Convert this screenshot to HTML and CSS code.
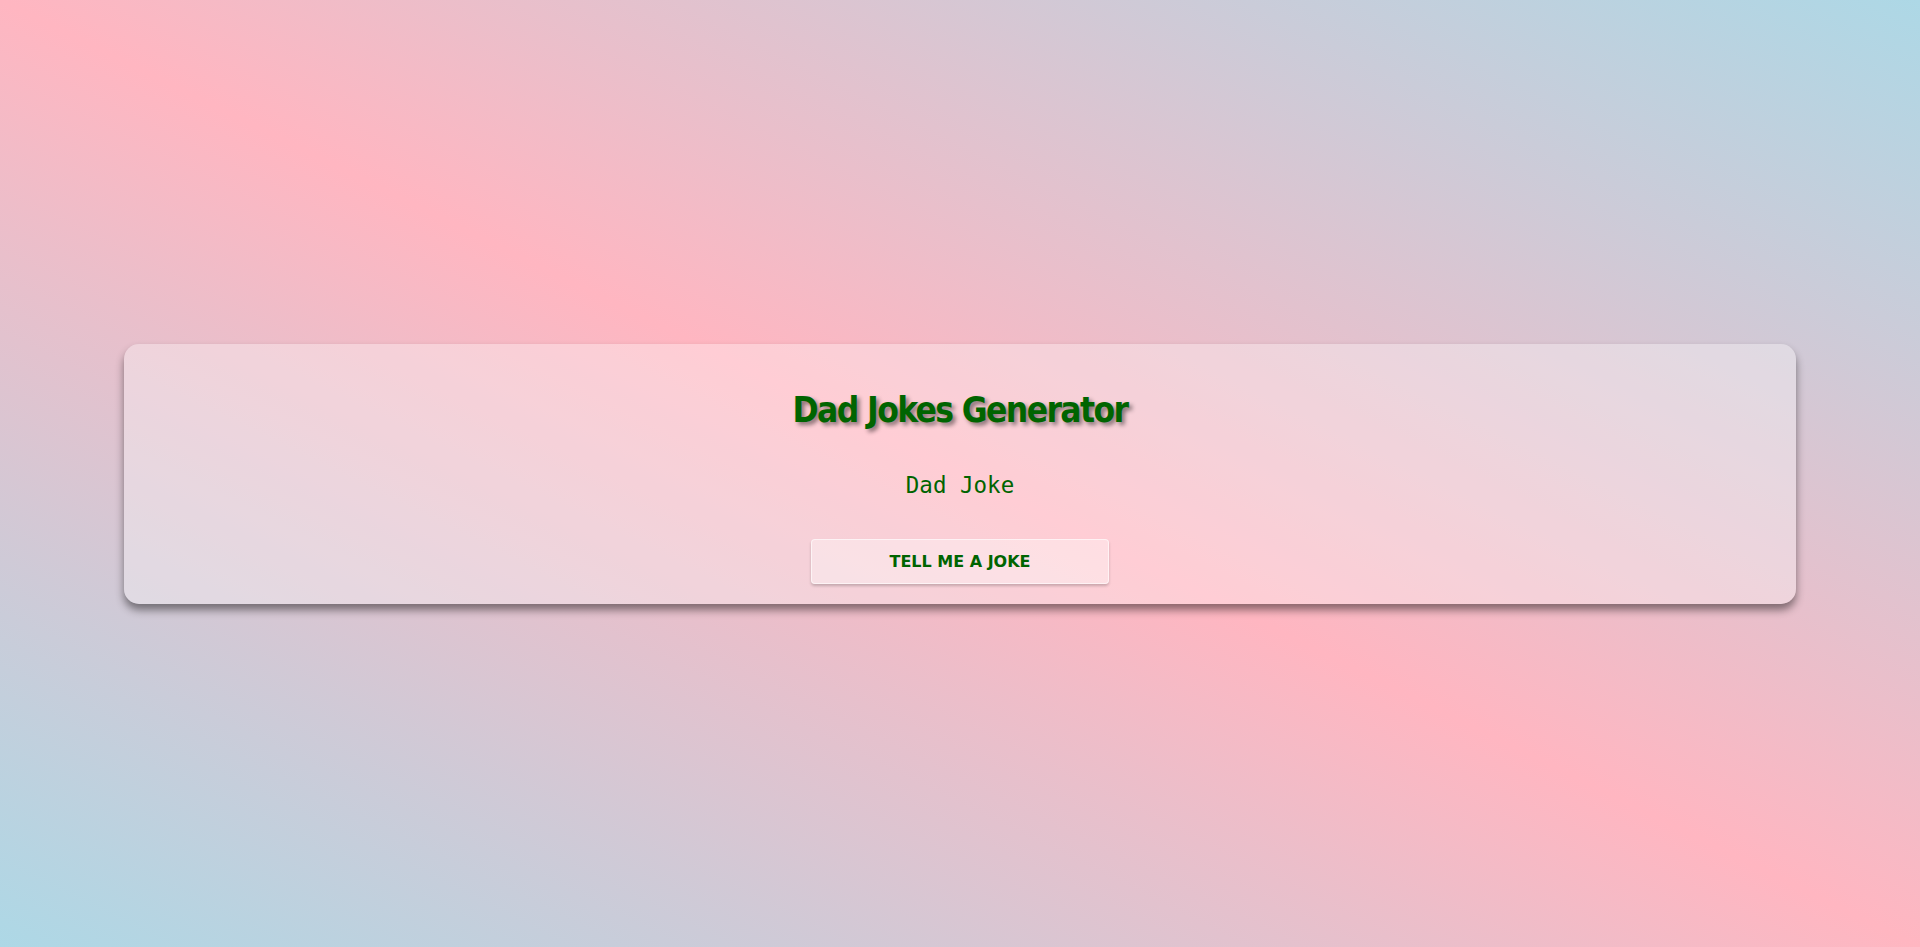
FILE: index.html
```html
<!DOCTYPE html>
<html lang="en">
<head>
<meta charset="UTF-8">
<title>Dad Jokes Generator</title>
<link rel="stylesheet" href="styles.css">
</head>
<body>
  <main class="page">
    <section class="card">
      <h1 class="title">Dad Jokes Generator</h1>
      <p class="joke">Dad Joke</p>
      <button class="btn" type="button">TELL ME A JOKE</button>
    </section>
  </main>
</body>
</html>
```
FILE: styles.css
```css
html, body {
  margin: 0;
  height: 100%;
}

body {
  background: linear-gradient(to top right, #add8e6, #ffb6c1, #add8e6);
  background-attachment: fixed;
}

.page {
  height: 100%;
  display: flex;
  align-items: center;
  padding: 0 124px;
  box-sizing: border-box;
}

.card {
  flex: 1;
  display: flex;
  flex-direction: column;
  align-items: center;
  padding: 45px 20px 20px;
  background: rgba(255, 255, 255, 0.32);
  border-radius: 15px;
  box-shadow: 0 6px 8px rgba(0, 0, 0, 0.45);
}

.title {
  margin: 0;
  font-family: "DejaVu Sans Condensed", "DejaVu Sans", sans-serif;
  font-stretch: condensed;
  font-weight: bold;
  font-size: 35px;
  line-height: 42px;
  letter-spacing: -1.6px;
  color: #006400;
  text-shadow: 3px 3px 4px rgba(0, 0, 0, 0.45);
}

.joke {
  margin: 41px 0 0;
  font-family: "DejaVu Sans Mono", monospace;
  font-size: 22.5px;
  line-height: 26px;
  color: #006400;
}

.btn {
  margin-top: 41px;
  width: 298px;
  height: 45px;
  font-family: "DejaVu Sans", Verdana, sans-serif;
  font-weight: bold;
  font-size: 16px;
  color: #006400;
  background: rgba(255, 255, 255, 0.35);
  border: 1px solid rgba(255, 255, 255, 0.6);
  border-radius: 4px;
  box-shadow: 0 2px 3px rgba(0, 0, 0, 0.2);
  cursor: pointer;
}
```
